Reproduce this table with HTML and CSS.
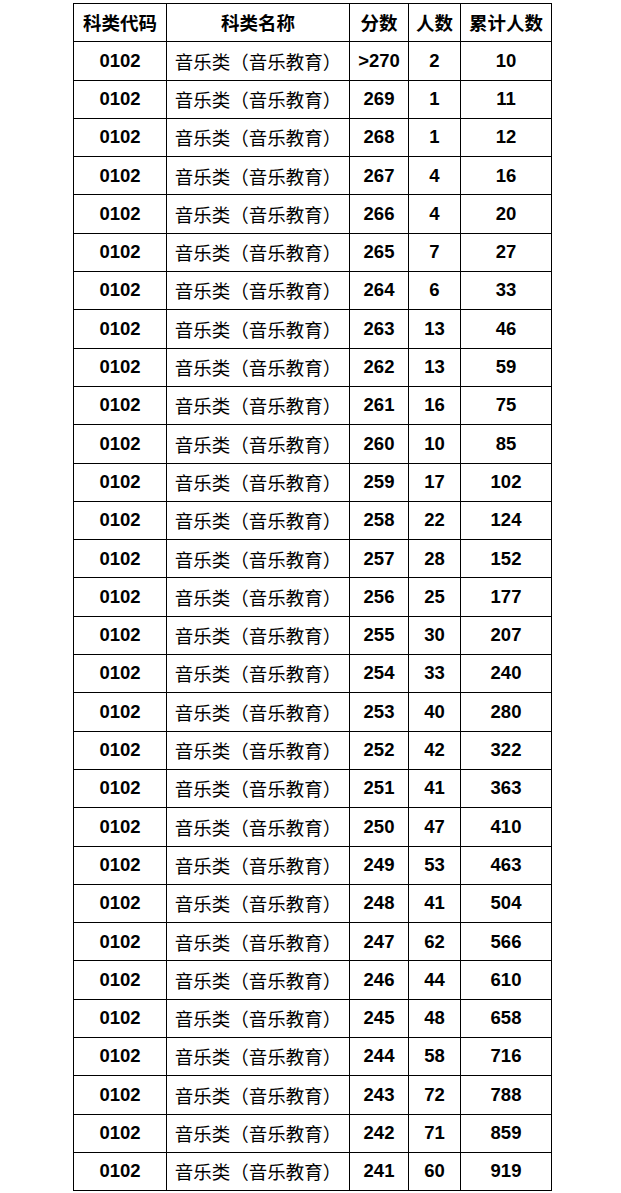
FILE: index.html
```html
<!DOCTYPE html>
<html lang="zh-CN">
<head>
<meta charset="utf-8">
<title>音乐类（音乐教育）分数段</title>
<link rel="stylesheet" href="styles.css">
</head>
<body>
<table class="score-table">
<colgroup>
<col class="c-code"><col class="c-name"><col class="c-score"><col class="c-num"><col class="c-total">
</colgroup>
<thead>
<tr><th>科类代码</th><th>科类名称</th><th>分数</th><th>人数</th><th>累计人数</th></tr>
</thead>
<tbody>
<tr><td class="b">0102</td><td class="n">音乐类（音乐教育）</td><td class="b">&gt;270</td><td class="b">2</td><td class="b">10</td></tr>
<tr><td class="b">0102</td><td class="n">音乐类（音乐教育）</td><td class="b">269</td><td class="b">1</td><td class="b">11</td></tr>
<tr><td class="b">0102</td><td class="n">音乐类（音乐教育）</td><td class="b">268</td><td class="b">1</td><td class="b">12</td></tr>
<tr><td class="b">0102</td><td class="n">音乐类（音乐教育）</td><td class="b">267</td><td class="b">4</td><td class="b">16</td></tr>
<tr><td class="b">0102</td><td class="n">音乐类（音乐教育）</td><td class="b">266</td><td class="b">4</td><td class="b">20</td></tr>
<tr><td class="b">0102</td><td class="n">音乐类（音乐教育）</td><td class="b">265</td><td class="b">7</td><td class="b">27</td></tr>
<tr><td class="b">0102</td><td class="n">音乐类（音乐教育）</td><td class="b">264</td><td class="b">6</td><td class="b">33</td></tr>
<tr><td class="b">0102</td><td class="n">音乐类（音乐教育）</td><td class="b">263</td><td class="b">13</td><td class="b">46</td></tr>
<tr><td class="b">0102</td><td class="n">音乐类（音乐教育）</td><td class="b">262</td><td class="b">13</td><td class="b">59</td></tr>
<tr><td class="b">0102</td><td class="n">音乐类（音乐教育）</td><td class="b">261</td><td class="b">16</td><td class="b">75</td></tr>
<tr><td class="b">0102</td><td class="n">音乐类（音乐教育）</td><td class="b">260</td><td class="b">10</td><td class="b">85</td></tr>
<tr><td class="b">0102</td><td class="n">音乐类（音乐教育）</td><td class="b">259</td><td class="b">17</td><td class="b">102</td></tr>
<tr><td class="b">0102</td><td class="n">音乐类（音乐教育）</td><td class="b">258</td><td class="b">22</td><td class="b">124</td></tr>
<tr><td class="b">0102</td><td class="n">音乐类（音乐教育）</td><td class="b">257</td><td class="b">28</td><td class="b">152</td></tr>
<tr><td class="b">0102</td><td class="n">音乐类（音乐教育）</td><td class="b">256</td><td class="b">25</td><td class="b">177</td></tr>
<tr><td class="b">0102</td><td class="n">音乐类（音乐教育）</td><td class="b">255</td><td class="b">30</td><td class="b">207</td></tr>
<tr><td class="b">0102</td><td class="n">音乐类（音乐教育）</td><td class="b">254</td><td class="b">33</td><td class="b">240</td></tr>
<tr><td class="b">0102</td><td class="n">音乐类（音乐教育）</td><td class="b">253</td><td class="b">40</td><td class="b">280</td></tr>
<tr><td class="b">0102</td><td class="n">音乐类（音乐教育）</td><td class="b">252</td><td class="b">42</td><td class="b">322</td></tr>
<tr><td class="b">0102</td><td class="n">音乐类（音乐教育）</td><td class="b">251</td><td class="b">41</td><td class="b">363</td></tr>
<tr><td class="b">0102</td><td class="n">音乐类（音乐教育）</td><td class="b">250</td><td class="b">47</td><td class="b">410</td></tr>
<tr><td class="b">0102</td><td class="n">音乐类（音乐教育）</td><td class="b">249</td><td class="b">53</td><td class="b">463</td></tr>
<tr><td class="b">0102</td><td class="n">音乐类（音乐教育）</td><td class="b">248</td><td class="b">41</td><td class="b">504</td></tr>
<tr><td class="b">0102</td><td class="n">音乐类（音乐教育）</td><td class="b">247</td><td class="b">62</td><td class="b">566</td></tr>
<tr><td class="b">0102</td><td class="n">音乐类（音乐教育）</td><td class="b">246</td><td class="b">44</td><td class="b">610</td></tr>
<tr><td class="b">0102</td><td class="n">音乐类（音乐教育）</td><td class="b">245</td><td class="b">48</td><td class="b">658</td></tr>
<tr><td class="b">0102</td><td class="n">音乐类（音乐教育）</td><td class="b">244</td><td class="b">58</td><td class="b">716</td></tr>
<tr><td class="b">0102</td><td class="n">音乐类（音乐教育）</td><td class="b">243</td><td class="b">72</td><td class="b">788</td></tr>
<tr><td class="b">0102</td><td class="n">音乐类（音乐教育）</td><td class="b">242</td><td class="b">71</td><td class="b">859</td></tr>
<tr><td class="b">0102</td><td class="n">音乐类（音乐教育）</td><td class="b">241</td><td class="b">60</td><td class="b">919</td></tr>
</tbody>
</table>
</body>
</html>
```
FILE: styles.css
```css
html, body {
  margin: 0;
  padding: 0;
  background: #ffffff;
}
body {
  padding: 3px 0 0 73px;
  color: #000;
  font-family: "Liberation Sans", "Noto Sans CJK SC", sans-serif;
}
.score-table {
  border-collapse: collapse;
  table-layout: fixed;
  width: 478px;
}
.c-code { width: 93px; }
.c-name { width: 183px; }
.c-score { width: 59px; }
.c-num { width: 52px; }
.c-total { width: 91px; }
.score-table th,
.score-table td {
  border: 1px solid #000;
  height: 37.3px;
  padding: 0;
  text-align: center;
  vertical-align: middle;
  white-space: nowrap;
  overflow: hidden;
  line-height: 1;
}
.score-table th {
  font-family: "Noto Sans CJK SC", sans-serif;
  font-weight: bold;
  font-size: 18.5px;
}
.score-table td.b {
  font-family: "Liberation Sans", Arial, sans-serif;
  font-weight: bold;
  font-size: 18.5px;
}
.score-table td.n {
  font-family: "Noto Sans CJK SC", sans-serif;
  font-weight: normal;
  font-size: 18.5px;
}
```
